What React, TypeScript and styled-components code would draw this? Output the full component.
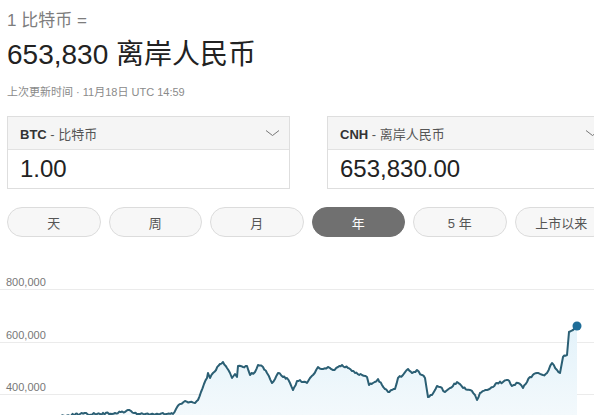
import React from "react";
import styled, { createGlobalStyle } from "styled-components";

const GlobalStyle = createGlobalStyle`
  html, body { margin: 0; padding: 0; background: #fff; }
  body { overflow: hidden; font-family: "Liberation Sans", "Noto Sans CJK SC", Arial, sans-serif; }
`;

const FONT = `"Liberation Sans", "Noto Sans CJK SC", Arial, sans-serif`;

const Page = styled.div`
  width: 594px;
  height: 415px;
  overflow: hidden;
  font-family: ${FONT};
`;

const Summary = styled.div`
  padding: 11px 0 0 7px;
`;

const Caption = styled.div`
  font-size: 17px;
  line-height: 20px;
  color: #7d7d7d;
`;

const Amount = styled.div`
  margin-top: 8px;
  font-size: 28px;
  line-height: 32px;
  color: #222;
`;

const Updated = styled.div`
  margin-top: 14px;
  font-size: 11px;
  line-height: 14px;
  color: #8a8a8a;
`;

const Converters = styled.div`
  display: flex;
  gap: 37px;
  margin-top: 17px;
  padding-left: 7px;
`;

const Card = styled.div`
  flex: 0 0 283px;
  box-sizing: border-box;
  border: 1px solid #dedede;
  background: #fff;
`;

const CardHeader = styled.div`
  display: flex;
  align-items: center;
  height: 32px;
  padding: 0 9px 0 12px;
  background: #f5f5f5;
  border-bottom: 1px solid #e2e2e2;
  font-size: 13px;
  color: #555;
`;

const Code = styled.span`
  font-weight: bold;
  color: #333;
`;

const Label = styled.span`
  flex: 1;
  white-space: pre;
`;

const Value = styled.div`
  height: 38px;
  line-height: 38px;
  padding-left: 12px;
  font-size: 24px;
  color: #222;
`;

const RangeTabs = styled.div`
  display: flex;
  gap: 8px;
  margin-top: 18px;
  padding-left: 7px;
`;

const Pill = styled.div<{ $active?: boolean }>`
  flex: 0 0 93.5px;
  box-sizing: border-box;
  height: 30px;
  border-radius: 15px;
  display: flex;
  align-items: center;
  justify-content: center;
  font-size: 13px;
  white-space: nowrap;
  color: ${(p) => (p.$active ? "#fff" : "#555")};
  background: ${(p) => (p.$active ? "#707070" : "#f7f7f7")};
  border: 1px solid ${(p) => (p.$active ? "#707070" : "#dcdcdc")};
`;

const ChartSvg = styled.svg`
  display: block;
  margin-top: 23px;
`;

const Chevron = () => (
  <svg width="15" height="8" viewBox="0 0 15 8">
    <path d="M1 1.5 L7.5 6.5 L14 1.5" fill="none" stroke="#777" strokeWidth="1" />
  </svg>
);

const KEY: [number, number][] = [
  [0, 421], [40, 418], [80, 414], [100, 414], [115, 413], [125, 412], [128, 410], [131, 411],
  [134, 413], [140, 414], [160, 414], [173, 414], [176, 409], [180, 404], [185, 401], [190, 402],
  [195, 403], [198, 400], [201, 392], [204, 384], [207, 378], [208, 373], [210, 378], [213, 373],
  [216, 370], [220, 364], [223, 362], [227, 368], [230, 373], [232, 378], [235, 374], [237, 377],
  [238, 366], [243, 367], [247, 366], [250, 375], [255, 372], [258, 365], [263, 367], [267, 373],
  [272, 383], [275, 379], [278, 373], [283, 377], [287, 378], [290, 383], [293, 390], [297, 381],
  [300, 380], [303, 382], [307, 383], [310, 378], [313, 375], [318, 367], [323, 369], [328, 367],
  [333, 370], [338, 367], [342, 365], [348, 368], [352, 371], [355, 373], [362, 375], [367, 377],
  [369, 385], [373, 383], [378, 379], [382, 385], [385, 389], [388, 392], [392, 390], [395, 389],
  [398, 378], [403, 375], [408, 369], [412, 373], [417, 370], [422, 375], [425, 378], [428, 397],
  [432, 395], [437, 386], [440, 387], [445, 392], [450, 388], [457, 382], [463, 388], [470, 390],
  [475, 395], [477, 400], [480, 393], [487, 390], [493, 387], [497, 383], [503, 382], [508, 380],
  [512, 386], [518, 383], [523, 388], [527, 382], [530, 377], [537, 373], [543, 375], [547, 373],
  [552, 363], [557, 370], [560, 373], [563, 357], [567, 355], [569, 332], [573, 330], [577, 326],
];

function buildPath(): string {
  let seed = 7;
  const rnd = () => {
    seed = (seed * 1103515245 + 12345) % 2147483648;
    return seed / 2147483648;
  };
  const out: [number, number][] = [];
  for (let i = 0; i < KEY.length - 1; i++) {
    const [x0, y0] = KEY[i];
    const [x1, y1] = KEY[i + 1];
    const steps = Math.max(1, Math.round((x1 - x0) / 1.5));
    for (let s = 0; s < steps; s++) {
      const t = s / steps;
      const x = x0 + (x1 - x0) * t;
      let y = y0 + (y1 - y0) * t;
      if (s > 0 && x > 60 && x < 565) y += (rnd() - 0.5) * 2.2;
      out.push([x, y - 260]);
    }
  }
  const last = KEY[KEY.length - 1];
  out.push([last[0], last[1] - 260]);
  return out.map((p, i) => `${i ? "L" : "M"}${p[0].toFixed(1)} ${p[1].toFixed(1)}`).join(" ");
}

const LINE = buildPath();
const AREA = `${LINE} L577 155 L0 155 Z`;

const GRID = [
  { y: 29.5, label: "800,000" },
  { y: 82.5, label: "600,000" },
  { y: 134.5, label: "400,000" },
];

const RANGES = ["天", "周", "月", "年", "5 年", "上市以来"];

export default function App() {
  return (
    <Page>
      <GlobalStyle />
      <Summary>
        <Caption>1 比特币 =</Caption>
        <Amount>653,830 离岸人民币</Amount>
        <Updated>上次更新时间 · 11月18日 UTC 14:59</Updated>
      </Summary>
      <Converters>
        <Card>
          <CardHeader>
            <Label>
              <Code>BTC</Code> - 比特币
            </Label>
            <Chevron />
          </CardHeader>
          <Value>1.00</Value>
        </Card>
        <Card>
          <CardHeader>
            <Label>
              <Code>CNH</Code> - 离岸人民币
            </Label>
            <Chevron />
          </CardHeader>
          <Value>653,830.00</Value>
        </Card>
      </Converters>
      <RangeTabs>
        {RANGES.map((r) => (
          <Pill key={r} $active={r === "年"}>
            {r}
          </Pill>
        ))}
      </RangeTabs>
      <ChartSvg width="594" height="155" viewBox="0 0 594 155">
        <defs>
          <linearGradient id="area" x1="0" y1="60" x2="0" y2="155" gradientUnits="userSpaceOnUse">
            <stop offset="0" stopColor="#e2f2fa" />
            <stop offset="1" stopColor="#f3f9fc" />
          </linearGradient>
        </defs>
        {GRID.map((g) => (
          <g key={g.label}>
            <line x1="0" x2="594" y1={g.y} y2={g.y} stroke="#ebebeb" strokeWidth="1" />
            <text x="6" y={g.y - 3.5} fontSize="11" fill="#777" fontFamily={FONT}>
              {g.label}
            </text>
          </g>
        ))}
        <path d={AREA} fill="url(#area)" />
        <path d={LINE} fill="none" stroke="#2b5f74" strokeWidth="2" strokeLinejoin="round" />
        <circle cx="577" cy="66" r="4.5" fill="#1f6d98" />
      </ChartSvg>
    </Page>
  );
}
